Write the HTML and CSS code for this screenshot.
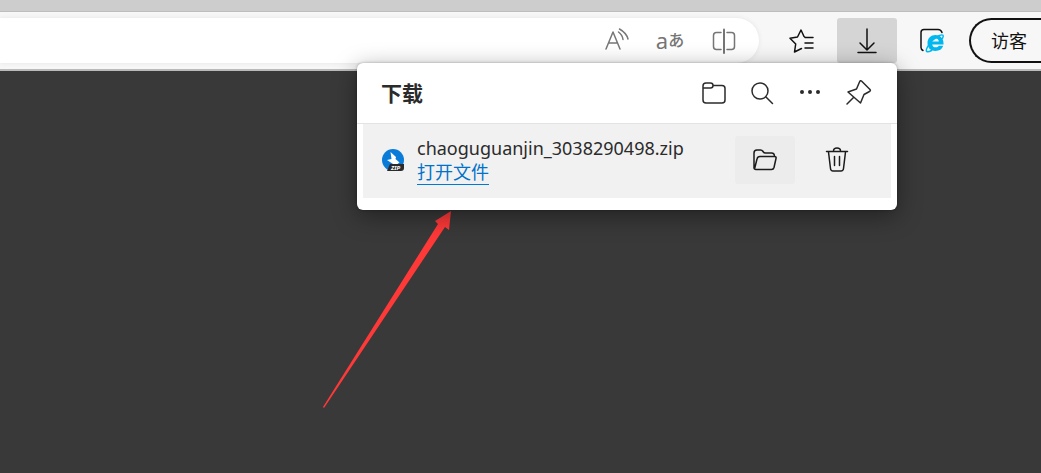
FILE: index.html
```html
<!DOCTYPE html>
<html lang="zh-CN">
<head>
<meta charset="utf-8">
<title>下载</title>
<link rel="stylesheet" href="styles.css">
</head>
<body>
<div class="browser">
  <div class="tabstrip"></div>
  <header class="toolbar">
    <div class="address">
      <input class="address-input" type="text" aria-label="地址栏">
      <button class="address-button" aria-label="大声朗读">
        <svg width="28" height="28" viewBox="0 0 28 28"><path d="M4 22 11 5l7 17M6.500 16h9M16.500 5q4 3 4.500 7.500M17.500 2q7 4 8.500 10"/></svg>
      </button>
      <button class="address-button translate" aria-label="翻译"><span class="latin">a</span><span class="kana">あ</span></button>
      <button class="address-button" aria-label="分屏">
        <svg width="28" height="28" viewBox="0 0 28 28"><path d="M11 5.500H6.500q-3 0-3 3v11q0 3 3 3H11M17 5.500h4.500q3 0 3 3v11q0 3-3 3H17"/><path class="gray-bar" d="M14 2.500v23.500"/></svg>
      </button>
    </div>
    <nav class="actions">
      <button class="tool" aria-label="收藏夹">
        <svg width="30" height="30" viewBox="0 0 30 30"><path d="M25 11.500h-6.500L17 10.500 14 4l-3.500 7-7.500 1.300 5.700 5.700L7.500 26l7-3.500M18 11.500h8M18 17h8M18 22h8"/></svg>
      </button>
      <button class="tool active" aria-label="下载">
        <svg width="30" height="30" viewBox="0 0 30 30"><path d="M15 3v21M8 17l7 7 7-7M6 26.500h18"/></svg>
      </button>
      <button class="tool" aria-label="Internet Explorer 模式">
        <svg width="30" height="30" viewBox="0 0 30 30"><path d="M6 24.500q-2-1-2-3V6.500q0-3 3-3h14q3 0 4 3"/><path class="ie-letter" d="M10.500 17C10.500 12 14 9 18.500 9s8 3 8 8.200v1.300H15.200c.4 2 1.600 2.800 3.500 2.800 1.500 0 2.600-.5 3-1.500h4.500c-1 3.400-4 5.200-7.700 5.200-4.800 0-8-3-8-8Zm4.700-1.500h6.700c-.2-1.800-1.500-2.900-3.300-2.900s-3.100 1.100-3.400 2.900Z"/><path class="ie-ring" d="M14.500 24.500c-5 2.500-6.500 1-4-3.500 3-5.500 7.500-9.500 12-11.500 3.800-1.500 4.500 0 3 3"/></svg>
      </button>
      <button class="profile">访客</button>
    </nav>
  </header>
  <main class="page">
    <svg class="pointer" width="140" height="210" viewBox="0 0 140 210" aria-hidden="true"><path d="M131 11 129 30 125 27 4 208 3 207 118 24 115 21Z"/></svg>
  </main>
  <section class="downloads">
    <div class="downloads-head">
      <h1>下载</h1>
      <button class="head-button" aria-label="打开下载文件夹">
        <svg width="28" height="28" viewBox="0 0 28 28"><path d="M13 6.500h9q3 0 3 3V21q0 3-3 3H6q-3 0-3-3V7q0-3 3-3h4.500Q13 4 13 6.500 13 9 10.500 9H3.500"/></svg>
      </button>
      <button class="head-button" aria-label="搜索下载">
        <svg width="28" height="28" viewBox="0 0 28 28"><circle cx="12" cy="12" r="8"/><path d="m18 18 6.500 6.500"/></svg>
      </button>
      <button class="head-button" aria-label="更多选项">
        <svg width="28" height="28" viewBox="0 0 28 28"><g class="dots"><circle cx="6" cy="13" r="2"/><circle cx="14" cy="13" r="2"/><circle cx="22" cy="13" r="2"/></g></svg>
      </button>
      <button class="head-button" aria-label="固定下载">
        <svg width="28" height="28" viewBox="0 0 28 28"><path d="M17.500 2 26 10.500q1 1-.5 2l-5.500 3-3.500 8.500L4 13l8.500-3 3-7q1-2 2-1ZM9.500 18.500 3 25"/></svg>
      </button>
    </div>
    <div class="item">
      <svg class="file-icon" width="22" height="22" viewBox="0 0 22 22" aria-hidden="true"><circle class="blue" cx="11" cy="11" r="11"/><path class="bolt" d="M8.500 3 14 8l-.5 2 4 3.500-2 1.500H11L5 11l4.500-1Z"/><path class="tag" d="M8 15h14v4q0 3-3 3H5Z"/><text class="tag-text" x="9" y="21">ZIP</text></svg>
      <div class="details">
        <div class="filename">chaoguguanjin_3038290498.zip</div>
        <a class="open-link" href="#">打开文件</a>
      </div>
      <button class="item-button shaded" aria-label="在文件夹中显示">
        <svg width="28" height="28" viewBox="0 0 28 28"><path d="M3 22V7q0-3 3-3H9.500q1.500 0 2.500 1.500T14.500 7h6q3 0 3 3.500M3.500 23 6 13q.5-2.500 3-2.500H23.500q2 0 1.500 2L23 21.500q-.5 2-2.500 2H5q-2 0-2-2"/></svg>
      </button>
      <button class="item-button" aria-label="删除文件">
        <svg width="28" height="28" viewBox="0 0 28 28"><path d="M3.500 5.500h21M10.500 5q0-3 3.500-3t3.500 3M5.500 6 7.500 22.500q.3 2.500 2.500 2.500h8q2.200 0 2.500-2.500L22.500 6M11.500 10.500V19.500M16.500 10.500V19.500"/></svg>
      </button>
    </div>
  </section>
</div>
</body>
</html>
```
FILE: styles.css
```css
* { box-sizing: border-box; }

body {
  margin: 0;
  font-family: "Noto Sans", "Noto Sans CJK SC", sans-serif;
  color: #2b2b2b;
}

button {
  display: flex;
  align-items: center;
  justify-content: center;
  padding: 0;
  border: 0;
  background: transparent;
  color: inherit;
  font: inherit;
}

svg {
  display: block;
  flex: none;
  fill: none;
  stroke: currentColor;
  stroke-width: 1.5;
  stroke-linecap: round;
  stroke-linejoin: round;
}

.browser {
  position: relative;
  display: flex;
  flex-direction: column;
  min-height: 100vh;
  overflow: hidden;
}

.tabstrip {
  height: 12px;
  background: #cdcdcd;
  border-bottom: 1px solid #bdbdbd;
}

.toolbar {
  display: flex;
  gap: 13px;
  padding: 6px 0;
  background: #f7f7f7;
  border-bottom: 2px solid #b9bab9;
}

.address {
  display: flex;
  flex: 1;
  align-items: center;
  height: 45px;
  padding-right: 8px;
  background: #fff;
  border-radius: 0 23px 23px 0;
  box-shadow: 0 0 5px #e4e4e4;
}

.address-input {
  flex: 1;
  min-width: 0;
  height: 40px;
  border: 0;
  outline: 0;
  background: transparent;
  font: inherit;
}

.address-button {
  width: 54px;
  height: 40px;
  color: #767676;
}

.gray-bar { stroke-width: 2; }

.translate { padding-bottom: 2px; }
.latin { font-size: 22px; line-height: 38px; }
.kana { font-size: 16px; line-height: 38px; font-weight: 500; }

.actions {
  display: flex;
  gap: 5px;
}

.tool {
  width: 60px;
  height: 45px;
  color: #111;
}

.active {
  background: #d5d5d5;
  border-radius: 3px;
}

.ie-letter { fill: #00b7ef; stroke: none; }
.ie-ring { stroke: #00b7ef; stroke-width: 1.5; }

.profile {
  justify-content: flex-start;
  width: 72px;
  height: 45px;
  margin-left: 2px;
  padding: 0 0 2px 20px;
  border: 2px solid #111;
  border-right: 0;
  border-radius: 23px 0 0 23px;
  color: #111;
  font-size: 18px;
}

.page {
  flex: 1;
  background: #393939;
}

.pointer {
  position: absolute;
  top: 200px;
  left: 320px;
  fill: #ff3838;
  stroke: none;
}

.downloads {
  position: absolute;
  top: 63px;
  right: 144px;
  width: 540px;
  padding-bottom: 12px;
  background: #fff;
  border-radius: 6px;
  box-shadow: 0 6px 24px rgba(0, 0, 0, 0.4), 0 0 3px rgba(0, 0, 0, 0.3);
}

.downloads-head {
  display: flex;
  align-items: center;
  height: 61px;
  padding: 0 15px 0 24px;
  border-bottom: 1px solid #e3e3e3;
}

.downloads-head h1 {
  flex: 1;
  margin: 0;
  font-size: 21px;
  line-height: 28px;
  font-weight: 700;
}

.head-button {
  width: 48px;
  height: 48px;
}

.dots { fill: currentColor; stroke: none; }

.item {
  display: flex;
  align-items: center;
  gap: 12px;
  margin: 0 6px;
  height: 74px;
  padding: 0 24px 2px 19px;
  background: #f1f1f1;
}

.blue { fill: #0b7bd8; stroke: none; }
.bolt { fill: #fff; stroke: none; }
.tag { fill: #292b2e; stroke: none; }
.tag-text {
  fill: #fff;
  stroke: none;
  font: italic 700 6px "Noto Sans", sans-serif;
}

.details {
  flex: 1;
  min-width: 0;
  padding-left: 1px;
}

.filename {
  font-size: 18px;
  line-height: 24px;
}

.open-link {
  display: block;
  width: fit-content;
  border-bottom: 1px solid #0078d4;
  color: #0072c9;
  font-size: 18px;
  line-height: 24px;
  text-decoration: none;
}

.item-button {
  width: 60px;
  height: 48px;
  border-radius: 3px;
  color: #1b1b1b;
}

.shaded { background: #ececec; }
```
